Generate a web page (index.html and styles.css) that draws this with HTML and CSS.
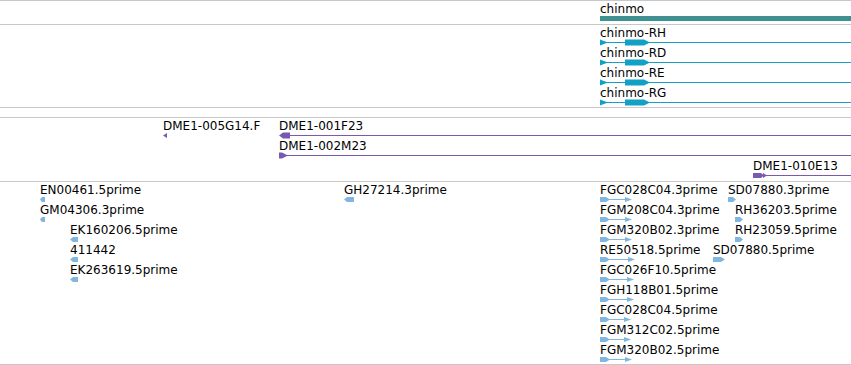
FILE: index.html
```html
<!DOCTYPE html>
<html lang="en">
<head>
  <meta charset="utf-8">
  <title>chinmo region</title>
  <link rel="stylesheet" href="styles.css">
</head>
<body>
  <div class="browser">

    <!-- gene span -->
    <div class="track track-gene">
      <div class="feature row-0" style="left:600px">
        <div class="label">chinmo</div>
        <div class="gene-bar"></div>
      </div>
    </div>

    <!-- transcripts -->
    <div class="track track-transcripts">
      <div class="feature transcript row-0" style="left:600px">
        <div class="label">chinmo-RH</div>
        <svg class="glyph" width="260" height="7"><rect x="0" y="3" width="260" height="1"/><polygon points="0,0.5 8,3.5 0,6.5"/><polygon points="25,0.5 44,0.5 50,3.5 44,6.5 25,6.5"/></svg>
      </div>
      <div class="feature transcript row-1" style="left:600px">
        <div class="label">chinmo-RD</div>
        <svg class="glyph" width="260" height="7"><rect x="0" y="3" width="260" height="1"/><polygon points="0,0.5 8,3.5 0,6.5"/><polygon points="25,0.5 44,0.5 50,3.5 44,6.5 25,6.5"/></svg>
      </div>
      <div class="feature transcript row-2" style="left:600px">
        <div class="label">chinmo-RE</div>
        <svg class="glyph" width="260" height="7"><rect x="0" y="3" width="260" height="1"/><polygon points="0,0.5 8,3.5 0,6.5"/><polygon points="25,0.5 44,0.5 50,3.5 44,6.5 25,6.5"/></svg>
      </div>
      <div class="feature transcript row-3" style="left:600px">
        <div class="label">chinmo-RG</div>
        <svg class="glyph" width="260" height="7"><rect x="0" y="3" width="260" height="1"/><polygon points="0,0.5 8,3.5 0,6.5"/><polygon points="25,0.5 44,0.5 50,3.5 44,6.5 25,6.5"/></svg>
      </div>
    </div>

    <!-- empty track -->
    <div class="track track-empty"></div>

    <!-- BAC ends -->
    <div class="track track-bac">
      <div class="feature bac row-0" style="left:163px">
        <div class="label">DME1-005G14.F</div>
        <svg class="glyph" width="5" height="7"><polygon points="0,3.5 4,1 4,6"/></svg>
      </div>
      <div class="feature bac row-0" style="left:279px">
        <div class="label">DME1-001F23</div>
        <svg class="glyph" width="580" height="7"><rect x="8" y="3" width="572" height="1"/><polygon points="0,3.5 4,0.5 11,0.5 11,6.5 4,6.5"/></svg>
      </div>
      <div class="feature bac row-1" style="left:279px">
        <div class="label">DME1-002M23</div>
        <svg class="glyph" width="580" height="7"><rect x="4" y="3" width="576" height="1"/><polygon points="0,0.5 3,0.5 9,3.5 3,6.5 0,6.5"/></svg>
      </div>
      <div class="feature bac row-2" style="left:753px">
        <div class="label">DME1-010E13</div>
        <svg class="glyph" width="100" height="7"><rect x="10" y="3" width="90" height="1"/><polygon points="0,1 8,1 11,3.5 8,6 0,6"/><polygon points="10,1 14,3.5 10,6"/></svg>
      </div>
    </div>

    <!-- ESTs -->
    <div class="track track-est">
      <div class="feature est row-0" style="left:40px">
        <div class="label">EN00461.5prime</div>
        <svg class="glyph" width="5" height="7"><polygon points="0,3.5 2,1 5,1 5,6 2,6"/></svg>
      </div>
      <div class="feature est row-1" style="left:40px">
        <div class="label">GM04306.3prime</div>
        <svg class="glyph" width="5" height="7"><polygon points="0,3.5 2,1 5,1 5,6 2,6"/></svg>
      </div>
      <div class="feature est row-2" style="left:70px">
        <div class="label">EK160206.5prime</div>
        <svg class="glyph" width="8" height="7"><polygon points="0,3.5 3,1 8,1 8,6 3,6"/></svg>
      </div>
      <div class="feature est row-3" style="left:70px">
        <div class="label">411442</div>
        <svg class="glyph" width="8" height="7"><polygon points="0,3.5 3,1 8,1 8,6 3,6"/></svg>
      </div>
      <div class="feature est row-4" style="left:70px">
        <div class="label">EK263619.5prime</div>
        <svg class="glyph" width="8" height="7"><polygon points="0,3.5 3,1 8,1 8,6 3,6"/></svg>
      </div>
      <div class="feature est row-0" style="left:344px">
        <div class="label">GH27214.3prime</div>
        <svg class="glyph" width="10" height="7"><polygon points="0,3.5 3,1 10,1 10,6 3,6"/></svg>
      </div>

      <div class="feature est row-0" style="left:600px">
        <div class="label">FGC028C04.3prime</div>
        <svg class="glyph" width="32" height="7"><rect x="0" y="3" width="28" height="1"/><polygon points="0,1 6,1 10,3.5 6,6 0,6"/><polygon points="25,1 32,3.5 25,6"/></svg>
      </div>
      <div class="feature est row-1" style="left:600px">
        <div class="label">FGM208C04.3prime</div>
        <svg class="glyph" width="32" height="7"><rect x="0" y="3" width="28" height="1"/><polygon points="0,1 6,1 10,3.5 6,6 0,6"/><polygon points="25,1 32,3.5 25,6"/></svg>
      </div>
      <div class="feature est row-2" style="left:600px">
        <div class="label">FGM320B02.3prime</div>
        <svg class="glyph" width="32" height="7"><rect x="0" y="3" width="28" height="1"/><polygon points="0,1 6,1 10,3.5 6,6 0,6"/><polygon points="25,1 32,3.5 25,6"/></svg>
      </div>
      <div class="feature est row-3" style="left:600px">
        <div class="label">RE50518.5prime</div>
        <svg class="glyph" width="35" height="7"><rect x="0" y="3" width="31" height="1"/><polygon points="0,1 6,1 10,3.5 6,6 0,6"/><polygon points="28,1 35,3.5 28,6"/></svg>
      </div>
      <div class="feature est row-4" style="left:600px">
        <div class="label">FGC026F10.5prime</div>
        <svg class="glyph" width="34" height="7"><rect x="0" y="3" width="30" height="1"/><polygon points="0,1 6,1 10,3.5 6,6 0,6"/><polygon points="27,1 34,3.5 27,6"/></svg>
      </div>
      <div class="feature est row-5" style="left:600px">
        <div class="label">FGH118B01.5prime</div>
        <svg class="glyph" width="34" height="7"><rect x="0" y="3" width="30" height="1"/><polygon points="0,1 6,1 10,3.5 6,6 0,6"/><polygon points="27,1 34,3.5 27,6"/></svg>
      </div>
      <div class="feature est row-6" style="left:600px">
        <div class="label">FGC028C04.5prime</div>
        <svg class="glyph" width="31" height="7"><rect x="0" y="3" width="27" height="1"/><polygon points="0,1 6,1 10,3.5 6,6 0,6"/><polygon points="24,1 31,3.5 24,6"/></svg>
      </div>
      <div class="feature est row-7" style="left:600px">
        <div class="label">FGM312C02.5prime</div>
        <svg class="glyph" width="31" height="7"><rect x="0" y="3" width="27" height="1"/><polygon points="0,1 6,1 10,3.5 6,6 0,6"/><polygon points="24,1 31,3.5 24,6"/></svg>
      </div>
      <div class="feature est row-8" style="left:600px">
        <div class="label">FGM320B02.5prime</div>
        <svg class="glyph" width="32" height="7"><rect x="0" y="3" width="28" height="1"/><polygon points="0,1 6,1 10,3.5 6,6 0,6"/><polygon points="25,1 32,3.5 25,6"/></svg>
      </div>

      <div class="feature est row-0" style="left:728px">
        <div class="label">SD07880.3prime</div>
        <svg class="glyph" width="8" height="7"><polygon points="0,1 5,1 8,3.5 5,6 0,6"/></svg>
      </div>
      <div class="feature est row-1" style="left:735px">
        <div class="label">RH36203.5prime</div>
        <svg class="glyph" width="8" height="7"><polygon points="0,1 5,1 8,3.5 5,6 0,6"/></svg>
      </div>
      <div class="feature est row-2" style="left:735px">
        <div class="label">RH23059.5prime</div>
        <svg class="glyph" width="8" height="7"><polygon points="0,1 5,1 8,3.5 5,6 0,6"/></svg>
      </div>
      <div class="feature est row-3" style="left:713px">
        <div class="label">SD07880.5prime</div>
        <svg class="glyph" width="12" height="7"><polygon points="0,1 8,1 12,3.5 8,6 0,6"/></svg>
      </div>
    </div>

  </div>
</body>
</html>
```

FILE: styles.css
```css
* {
  box-sizing: border-box;
}

body {
  margin: 0;
  background: #fff;
  font-family: "DejaVu Sans", Verdana, sans-serif;
  font-size: 12px;
  color: #000;
}

.browser {
  width: 851px;
  border-top: 1px solid #c8c8c8;
}

.track {
  position: relative;
  overflow: hidden;
  border-bottom: 1px solid #c8c8c8;
}

.track-gene { height: 24px; }
.track-transcripts { height: 83px; }
.track-empty { height: 10px; }
.track-bac { height: 64px; }
.track-est { height: 183px; }

/* features sit on 20px rows */
.feature {
  position: absolute;
}
.row-0 { top: 1px; }
.row-1 { top: 21px; }
.row-2 { top: 41px; }
.row-3 { top: 61px; }
.row-4 { top: 81px; }
.row-5 { top: 101px; }
.row-6 { top: 121px; }
.row-7 { top: 141px; }
.row-8 { top: 161px; }

.label {
  height: 14px;
  line-height: 14px;
  white-space: nowrap;
}

.glyph {
  display: block;
  margin-top: -1px;
}

.gene-bar {
  width: 260px;
  height: 5px;
  background: #3f9191;
}

.transcript .glyph { fill: #12a0c4; }
.bac .glyph { fill: #7a5aae; }
.est .glyph { fill: #80b6e0; }
```
